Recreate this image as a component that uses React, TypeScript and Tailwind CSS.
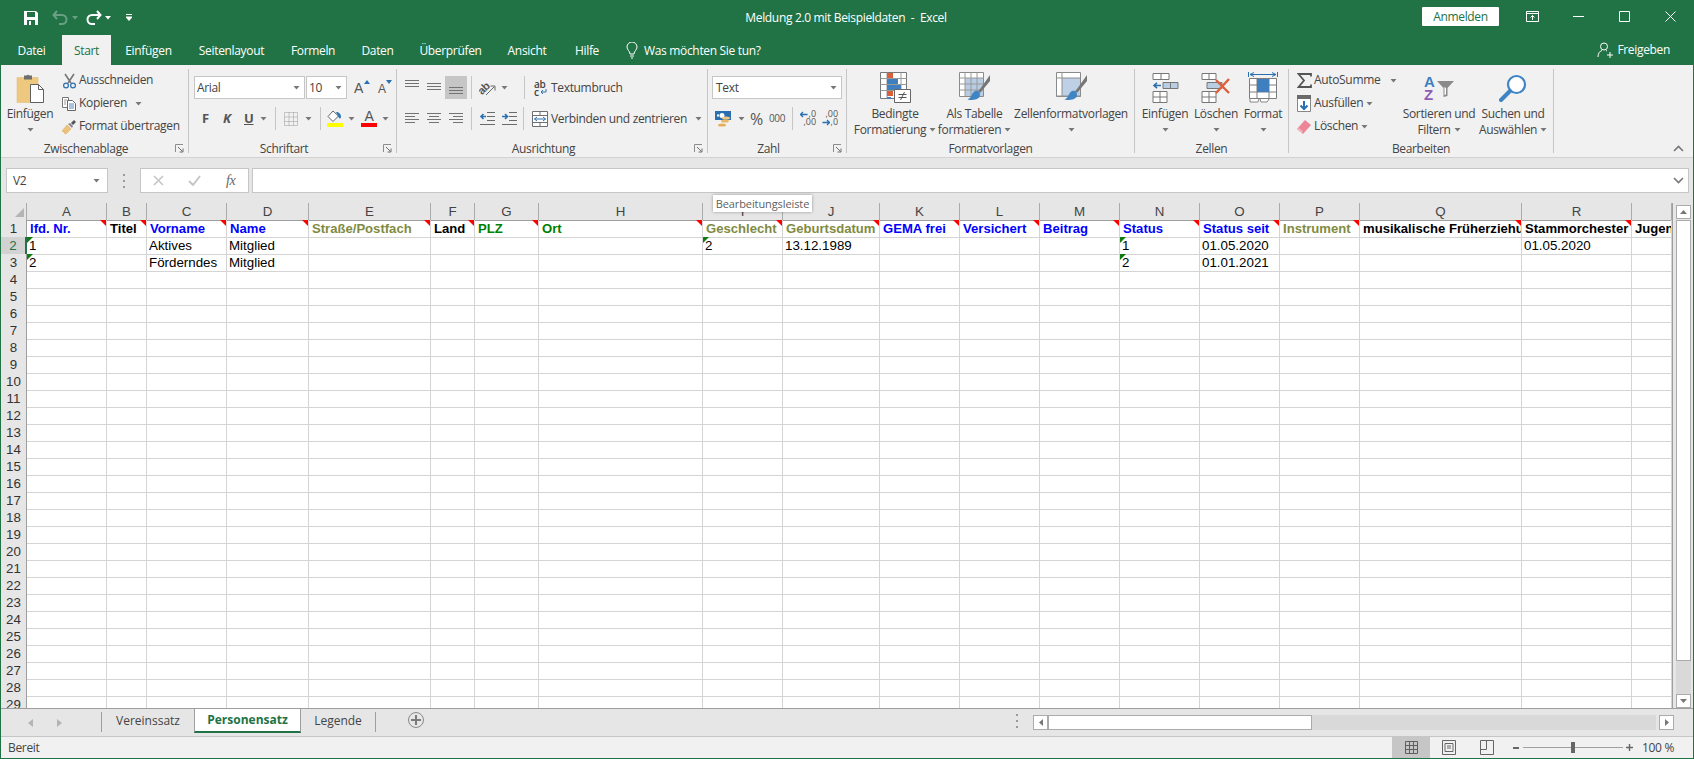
import type { ReactNode } from 'react';

function Caret({ dark = false }: { dark?: boolean }) {
  return (
    <svg width="7" height="4" viewBox="0 0 7 4" className="shrink-0">
      <path d="M.5 0h6L3.5 3.6z" fill={dark ? '#5f5f5f' : '#777'} />
    </svg>
  );
}

function Sep({ ml = '' }: { ml?: string }) {
  return <div className={`w-px h-[23px] bg-[#c6c6c6] shrink-0 ${ml}`} />;
}

function Launcher() {
  return (
    <svg width="9" height="9" viewBox="0 0 9 9" className="absolute right-[4px] bottom-0">
      <path d="M.5 8V.5H8" stroke="#8d8d8d" fill="none" />
      <path d="M3 3l4.5 4.5M8 4.5V8H4.5" stroke="#6f6f6f" fill="none" />
    </svg>
  );
}

function Group({ width, label, launcher, children }: { width: string; label: string; launcher?: boolean; children: ReactNode }) {
  return (
    <div className={`${width} shrink-0 flex flex-col border-r border-[#c6c6c6] relative h-[84px]`}>
      <div className="h-[72px] shrink-0">{children}</div>
      <div className={`h-[16px] shrink-0 leading-[16px] text-center whitespace-nowrap ${launcher ? 'pr-[17px]' : ''}`}>{label}</div>
      {launcher && <Launcher />}
    </div>
  );
}

function BigBtn({ width, icon, line1, line2, caret2 }: { width: string; icon: ReactNode; line1: string; line2?: string; caret2?: boolean }) {
  return (
    <div className={`${width} shrink-0 flex flex-col items-center pt-[3px]`}>
      <div className="h-[31px] flex items-center justify-center">{icon}</div>
      <div className="mt-[3px] h-[16px] leading-[16px] whitespace-nowrap">{line1}</div>
      <div className="h-[16px] flex items-center justify-center gap-[3px] whitespace-nowrap leading-[16px]">
        {line2}
        {caret2 && <Caret />}
      </div>
    </div>
  );
}

function SmallRow({ icon, label, caret, caretGap = 'ml-[3px]' }: { icon: ReactNode; label: string; caret?: boolean; caretGap?: string }) {
  return (
    <div className="h-[23px] flex items-center whitespace-nowrap">
      <div className="w-[18px] flex justify-center shrink-0">{icon}</div>
      <span className="ml-[1px] -mt-[2px]">{label}</span>
      {caret && (
        <span className={caretGap}>
          <Caret />
        </span>
      )}
    </div>
  );
}

function Lines({ y, x }: { y: number[]; x: number[][] }) {
  return (
    <svg width="15" height="15" viewBox="0 0 15 15" className="shrink-0">
      {y.map((v, i) => (
        <rect key={i} x={x[i][0]} y={v} width={x[i][1]} height="1" fill="#737373" />
      ))}
    </svg>
  );
}

const FULL3 = [[0, 14], [0, 14], [0, 14]];

const Scissors = (
  <svg width="15" height="16" viewBox="0 0 15 16">
    <path d="M3 1l6 9M12 1L6 10" stroke="#777" strokeWidth="1.6" fill="none" />
    <circle cx="4" cy="12.5" r="2.4" stroke="#2a6fb0" strokeWidth="1.2" fill="none" />
    <circle cx="11" cy="12.5" r="2.4" stroke="#2a6fb0" strokeWidth="1.2" fill="none" />
  </svg>
);

const CopyIcon = (
  <svg width="15" height="15" viewBox="0 0 15 15">
    <path d="M.5 1.5h6v10h-6z" fill="#fff" stroke="#777" />
    <path d="M5.5 4.5h5l3 3v7h-8z" fill="#fff" stroke="#666" />
    <path d="M7 8h5M7 10h5M7 12h5" stroke="#4f86c0" />
    <path d="M2 4h3M2 6h2M2 8h2" stroke="#999" />
  </svg>
);

const Painter = (
  <svg width="16" height="16" viewBox="0 0 16 16">
    <path d="M1 12l5-6 4 4-5 5-2-1 1-2-2 1z" fill="#eec27a" stroke="#d9a75c" strokeWidth=".5" />
    <path d="M7 5l2-1 3 3-1 2z" fill="#888" />
    <path d="M10 4l3-3 2 2-3 3z" fill="#555" />
  </svg>
);

const PasteIcon = (
  <svg width="29" height="32" viewBox="0 0 29 32">
    <path d="M1 5.5h21v25H1z" fill="#edc87e" stroke="#e0b86c" strokeWidth=".5" />
    <path d="M8 3.5h2.5a2 2 0 0 1 3 0H16v4H8z" fill="#6f6f6f" />
    <path d="M14.5 12.5h8l5 5v13h-13z" fill="#fff" stroke="#5f5f5f" />
    <path d="M22.5 12.5v5h5" fill="none" stroke="#5f5f5f" />
  </svg>
);

const FillBucket = (
  <svg width="16" height="17" viewBox="0 0 16 17">
    <path d="M6 1L1 6.5l5 5 5.5-5.5z" fill="#fff" stroke="#666" />
    <path d="M9 2c3 0 5 2 5 5 0 1-1 2-2 1l-1-2z" fill="#2f77b6" />
    <rect x="0" y="13" width="16" height="4" fill="#ffff00" />
  </svg>
);

const GridDots = (
  <svg width="14" height="14" viewBox="0 0 14 14">
    <path d="M.5.5h13v13H.5zM.5 5h13M.5 9.5h13M5 .5v13M9.5.5v13" fill="none" stroke="#9a9a9a" strokeDasharray="1 1" />
  </svg>
);

const OrientIcon = (
  <svg width="18" height="17" viewBox="0 0 18 17">
    <text x="-1" y="13" fontSize="11" fontWeight="600" fill="#555" fontFamily="Liberation Sans" transform="rotate(-45 5 10)">ab</text>
    <path d="M7 16l8-8M11.5 7H16v4.5" stroke="#666" fill="none" />
  </svg>
);

const IndentLeft = (
  <svg width="16" height="13" viewBox="0 0 16 13">
    <path d="M8 .5h8M8 4.5h8M8 8.5h8M1 12.5h15" stroke="#6a6a6a" />
    <path d="M7 4.5H2M4.5 2L2 4.5 4.5 7" stroke="#2a6fb0" strokeWidth="1.6" fill="none" />
  </svg>
);

const IndentRight = (
  <svg width="16" height="13" viewBox="0 0 16 13">
    <path d="M8 .5h8M8 4.5h8M8 8.5h8M1 12.5h15" stroke="#6a6a6a" />
    <path d="M1 4.5h5M4 2l2.5 2.5L4 7" stroke="#2a6fb0" strokeWidth="1.6" fill="none" />
  </svg>
);

const WrapIcon = (
  <div className="w-[13px] h-[16px] relative text-[10px] leading-[8px] text-[#444] font-semibold">
    <div>ab</div>
    <div className="flex items-center">
      c
      <svg width="7" height="6" viewBox="0 0 7 6" className="ml-[1px]">
        <path d="M6 0v3H1M3 1L1 3l2 2" stroke="#2a6fb0" fill="none" />
      </svg>
    </div>
  </div>
);

const MergeIcon = (
  <svg width="16" height="16" viewBox="0 0 16 16">
    <path d="M.5.5h15v15H.5zM.5 4.5h15M.5 11.5h15M8 .5v4M8 11.5v4" fill="#fff" stroke="#6f6f6f" />
    <path d="M2.5 8h11M5 6L2.5 8 5 10M11 6l2.5 2L11 10" stroke="#2a6fb0" fill="none" />
  </svg>
);

const Currency = (
  <svg width="18" height="18" viewBox="0 0 18 18">
    <rect x="0" y="1" width="16" height="9" fill="#2a6fb0" />
    <circle cx="7" cy="5.5" r="2.5" fill="#fff" />
    <rect x="2" y="4.5" width="2" height="2" fill="#fff" />
    <ellipse cx="10" cy="11" rx="4" ry="1.6" fill="#eab765" />
    <ellipse cx="11" cy="8" rx="4" ry="1.6" fill="#f0c77e" />
    <ellipse cx="7" cy="15" rx="4" ry="1.6" fill="#e8ae57" />
  </svg>
);

function DecIcon({ more }: { more?: boolean }) {
  return (
    <div className="w-[16px] h-[17px] flex flex-col items-end text-[9px] leading-[8px] tracking-normal text-[#555] relative">
      <span>{more ? ',00' : ',0'}</span>
      <span>{more ? ',0' : ',00'}</span>
      <svg width="8" height="7" viewBox="0 0 8 7" className={more ? 'absolute left-0 bottom-[1px]' : 'absolute left-0 top-[1px]'}>
        {more ? (
          <path d="M.5 3.5H7M5 1l2.5 2.5L5 6" stroke="#2a6fb0" strokeWidth="1.3" fill="none" />
        ) : (
          <path d="M7.5 3.5H1M3 1L.5 3.5 3 6" stroke="#2a6fb0" strokeWidth="1.3" fill="none" />
        )}
      </svg>
    </div>
  );
}

const CondIcon = (
  <svg width="31" height="31" viewBox="0 0 31 31">
    <path d="M.5.5h26v26H.5z" fill="#fff" stroke="#777" />
    <path d="M.5 6.5h26M.5 12.5h26M.5 18.5h26M7 .5v26M21 .5v26" stroke="#9a9a9a" />
    <rect x="7" y="1" width="6" height="5" fill="#d9603b" />
    <rect x="7" y="7" width="11" height="5" fill="#3f7fbf" />
    <rect x="7" y="13" width="14" height="5" fill="#3f7fbf" />
    <rect x="7" y="19" width="6" height="5" fill="#d9603b" />
    <rect x="7" y="25" width="4" height="2" fill="#3f7fbf" />
    <path d="M14.5 17.5h16v13h-16z" fill="#fff" stroke="#666" />
    <path d="M18.5 22.5h8M18.5 25.5h8M24.5 20l-4 8" stroke="#555" fill="none" />
  </svg>
);

function TableBrush({ full }: { full?: boolean }) {
  return (
    <svg width="31" height="31" viewBox="0 0 31 31">
      <path d="M.5.5h24v24H.5z" fill="#fff" stroke="#8a8a8a" />
      <rect x="6" y="6" width="18" height="18" fill={full ? '#bdd0e6' : '#b8cde4'} />
      {!full && <path d="M.5 6h24M.5 12h24M.5 18h24M6 .5v24M12 .5v24M18 .5v24" stroke="#999" />}
      {full && <path d="M.5 6h24M6 .5v24M.5 24h24" stroke="#8f8f8f" />}
      <path d="M31 3L21 17l-2 2 2 2L31 9z" fill="#767676" />
      <path d="M16 19c3-1 5 1 5 4 0 4-5 5-10 5-2 0-3-1-2-1 4-1 3-6 7-8z" fill="#3f84c3" />
    </svg>
  );
}

const InsCells = (
  <svg width="27" height="31" viewBox="0 0 27 31">
    <path d="M1 1.5h16v6H1zM9 1.5v6M1 19.5h14v11H1zM1 25h14M8 19.5v11" fill="#fff" stroke="#777" />
    <path d="M11 10.5h15v6H11zM18.5 10.5v6" fill="#b9cde4" stroke="#777" />
    <path d="M9 13.5H2M5 10.8L2 13.5l3 2.7" stroke="#2a6fb0" strokeWidth="1.6" fill="none" />
  </svg>
);

const DelCells = (
  <svg width="31" height="31" viewBox="0 0 31 31">
    <path d="M1 1.5h14v6H1zM8 1.5v6M1 19.5h14v11H1zM1 25h14M8 19.5v11" fill="#fff" stroke="#777" />
    <path d="M6 10.5h15v6H6z" fill="#b9cde4" stroke="#777" />
    <path d="M15 8l13 13M28 7L15 21" stroke="#dd5f3b" strokeWidth="2.4" fill="none" />
  </svg>
);

const FormatCells = (
  <svg width="30" height="32" viewBox="0 0 30 32">
    <path d="M.5 0v5M29.5 0v5M2 2.5h26M6 .5L2 2.5l4 2M24 .5l4 2-4 2" stroke="#2a6fb0" fill="none" />
    <path d="M1.5 6.5h27v20h-27zM1.5 13h27M1.5 20h27M9 6.5v20M21 6.5v20" fill="#fff" stroke="#7d7d7d" />
    <rect x="9" y="7" width="12" height="13" fill="#3f7fbf" />
    <path d="M2 27v3h8l1-3M12 27l1 3h6l2-3" fill="#fff" stroke="#888" />
  </svg>
);

const Sigma = (
  <svg width="15" height="15" viewBox="0 0 15 15">
    <path d="M14 3.5V1H1.5L7 7.5 1.5 14H14v-2.5" fill="none" stroke="#555" strokeWidth="1.8" />
  </svg>
);

const FillDown = (
  <svg width="14" height="17" viewBox="0 0 14 17">
    <path d="M.5.5h13v16H.5z" fill="#fff" stroke="#888" />
    <rect width="14" height="4" fill="#6a6a6a" />
    <path d="M7 6v8M3.5 10.5L7 14l3.5-3.5" stroke="#2a6fb0" strokeWidth="2" fill="none" />
  </svg>
);

const Eraser = (
  <svg width="14" height="14" viewBox="0 0 14 14">
    <path d="M8 0l6 5-8 9-6-5z" fill="#ec8595" />
    <path d="M2 8l4 3.5L5 13 .5 9z" fill="#f3b7c0" />
  </svg>
);

const SortIcon = (
  <div className="w-[30px] h-[28px] flex items-center relative">
    <div className="flex flex-col text-[15px] leading-[13px] font-bold font-['Liberation_Sans']">
      <span className="text-[#3f7fbf]">A</span>
      <span className="text-[#8e5bb5]">Z</span>
    </div>
    <svg width="17" height="16" viewBox="0 0 17 16" className="absolute right-0 top-[7px]">
      <path d="M0 0h17L10.5 7v8l-4 1V7z" fill="#8a8a8a" />
      <path d="M7.5 6l1.5 1v6.5l-1.5.5z" fill="#fff" />
    </svg>
  </div>
);

const SearchIcon = (
  <svg width="28" height="28" viewBox="0 0 28 28">
    <circle cx="17.5" cy="10.5" r="8.5" fill="#fff" stroke="#3f84c3" strokeWidth="2.2" />
    <path d="M11 17L2 26" stroke="#3f84c3" strokeWidth="4" strokeLinecap="round" />
  </svg>
);

const Ribbon = () => (
  <div className="h-[93px] shrink-0 bg-[#f1f1f1] border-b border-[#d2d2d2] pt-[4px] flex text-[#444] relative">
    <Group width="w-[188px]" label="Zwischenablage" launcher>
      <div className="flex">
        <BigBtn width="w-[58px]" icon={PasteIcon} line1="Einfügen" caret2 />
        <div className="ml-[1px]">
          <SmallRow icon={Scissors} label="Ausschneiden" />
          <SmallRow icon={CopyIcon} label="Kopieren" caret caretGap="ml-[8px]" />
          <SmallRow icon={Painter} label="Format übertragen" />
        </div>
      </div>
    </Group>

    <Group width="w-[208px]" label="Schriftart" launcher>
      <div className="pt-[7px] pl-[5px] flex items-center h-[30px] font-normal">
        <div className="w-[111px] h-[23px] bg-white border border-[#c6c6c6] flex items-center justify-between pl-[2px] pr-[4px]">
          <span>Arial</span>
          <Caret />
        </div>
        <div className="w-[41px] h-[23px] ml-[1px] bg-white border border-[#c6c6c6] flex items-center justify-between pl-[2px] pr-[4px]">
          <span>10</span>
          <Caret />
        </div>
        <div className="ml-[7px] w-[16px] h-[16px] relative text-[14px] leading-[16px] text-[#555] font-['Liberation_Sans']">
          A
          <svg width="6" height="4" viewBox="0 0 6 4" className="absolute right-0 top-0">
            <path d="M3 0l3 4H0z" fill="#2a6fb0" />
          </svg>
        </div>
        <div className="ml-[8px] w-[14px] h-[16px] relative text-[12px] leading-[18px] text-[#555] font-['Liberation_Sans']">
          A
          <svg width="6" height="4" viewBox="0 0 6 4" className="absolute right-0 top-0">
            <path d="M3 4L0 0h6z" fill="#2a6fb0" />
          </svg>
        </div>
      </div>
      <div className="mt-[8px] h-[23px] pl-[13px] flex items-center">
        <span className="w-[7px] font-bold text-[13px] text-[#555]">F</span>
        <span className="ml-[14px] w-[9px] font-bold italic text-[13px] text-[#555]">K</span>
        <span className="ml-[12px] w-[9px] font-bold underline text-[13px] text-[#555]">U</span>
        <span className="ml-[7px]"><Caret /></span>
        <Sep ml="ml-[8px]" />
        <span className="ml-[8px]">{GridDots}</span>
        <span className="ml-[7px]"><Caret /></span>
        <Sep ml="ml-[8px]" />
        <span className="ml-[6px]">{FillBucket}</span>
        <span className="ml-[5px]"><Caret /></span>
        <div className="ml-[6px] w-[16px] h-[17px] flex flex-col items-center">
          <span className="text-[14px] leading-[13px] text-[#555] font-['Liberation_Sans']">A</span>
          <span className="w-[16px] h-[4px] bg-[#ff0000]" />
        </div>
        <span className="ml-[5px]"><Caret /></span>
      </div>
    </Group>

    <Group width="w-[311px]" label="Ausrichtung" launcher>
      <div className="pt-[7px] pl-[8px] h-[30px] flex items-center">
        <Lines y={[0, 3, 6]} x={FULL3} />
        <span className="ml-[7px]"><Lines y={[3, 6, 9]} x={FULL3} /></span>
        <div className="ml-[3px] w-[22px] h-[23px] bg-[#c6c6c6] flex items-center justify-center">
          <Lines y={[7, 10, 13]} x={FULL3} />
        </div>
        <Sep ml="ml-[4px]" />
        <span className="ml-[7px]">{OrientIcon}</span>
        <span className="ml-[4px]"><Caret /></span>
        <Sep ml="ml-[16px]" />
        <span className="ml-[9px]">{WrapIcon}</span>
        <span className="ml-[4px] whitespace-nowrap">Textumbruch</span>
      </div>
      <div className="mt-[8px] h-[23px] pl-[8px] flex items-center">
        <Lines y={[2, 5, 8, 11]} x={[[0, 14], [0, 10], [0, 14], [0, 10]]} />
        <span className="ml-[7px]"><Lines y={[2, 5, 8, 11]} x={[[0, 14], [2, 10], [0, 14], [2, 10]]} /></span>
        <span className="ml-[7px]"><Lines y={[2, 5, 8, 11]} x={[[0, 14], [4, 10], [0, 14], [4, 10]]} /></span>
        <Sep ml="ml-[7px]" />
        <span className="ml-[7px]">{IndentLeft}</span>
        <span className="ml-[6px]">{IndentRight}</span>
        <Sep ml="ml-[6px]" />
        <span className="ml-[8px]">{MergeIcon}</span>
        <span className="ml-[3px] whitespace-nowrap">Verbinden und zentrieren</span>
        <span className="ml-[8px]"><Caret /></span>
      </div>
    </Group>

    <Group width="w-[139px]" label="Zahl" launcher>
      <div className="pt-[7px] pl-[4px] h-[30px]">
        <div className="w-[130px] h-[23px] bg-white border border-[#c6c6c6] flex items-center justify-between pl-[3px] pr-[4px]">
          <span>Text</span>
          <Caret />
        </div>
      </div>
      <div className="mt-[8px] h-[23px] pl-[7px] flex items-center">
        {Currency}
        <span className="ml-[5px]"><Caret /></span>
        <span className="ml-[5px] text-[16px] leading-none text-[#555]">%</span>
        <span className="ml-[6px] text-[10px] text-[#555]">000</span>
        <Sep ml="ml-[7px]" />
        <span className="ml-[7px]"><DecIcon /></span>
        <span className="ml-[6px]"><DecIcon more /></span>
      </div>
    </Group>

    <Group width="w-[288px]" label="Formatvorlagen">
      <div className="flex pl-[6px]">
        <BigBtn width="w-[84px]" icon={CondIcon} line1="Bedingte" line2="Formatierung" caret2 />
        <BigBtn width="w-[75px]" icon={<TableBrush />} line1="Als Tabelle" line2="formatieren" caret2 />
        <BigBtn width="w-[118px]" icon={<TableBrush full />} line1="Zellenformatvorlagen" caret2 />
      </div>
    </Group>

    <Group width="w-[154px]" label="Zellen">
      <div className="flex pl-[5px]">
        <BigBtn width="w-[50px]" icon={InsCells} line1="Einfügen" caret2 />
        <BigBtn width="w-[52px]" icon={DelCells} line1="Löschen" caret2 />
        <BigBtn width="w-[42px]" icon={FormatCells} line1="Format" caret2 />
      </div>
    </Group>

    <Group width="w-[265px]" label="Bearbeiten">
      <div className="flex">
        <div className="w-[113px] pl-[6px]">
          <SmallRow icon={Sigma} label="AutoSumme" caret caretGap="ml-[10px]" />
          <SmallRow icon={FillDown} label="Ausfüllen" caret />
          <SmallRow icon={Eraser} label="Löschen" caret />
        </div>
        <BigBtn width="w-[74px]" icon={SortIcon} line1="Sortieren und" line2="Filtern" caret2 />
        <BigBtn width="w-[74px]" icon={SearchIcon} line1="Suchen und" line2="Auswählen" caret2 />
      </div>
    </Group>

    <div className="flex-1 flex justify-end items-end pr-[9px] pb-[5px]">
      <svg width="11" height="7" viewBox="0 0 11 7">
        <path d="M1 6l4.5-4.5L10 6" stroke="#777" strokeWidth="1.6" fill="none" />
      </svg>
    </div>
  </div>
);

const TitleBar = () => (
  <div className="h-[35px] shrink-0 flex text-white">
    <div className="w-[743px] shrink-0 flex items-center pl-[22px]">
      <svg width="16" height="16" viewBox="0 0 16 16">
        <path d="M1 1h12l2 2v12H1z" fill="#fff" />
        <rect x="4" y="2" width="8" height="5" fill="#217346" />
        <rect x="4" y="10" width="8" height="5" fill="#217346" />
        <rect x="6" y="11" width="2" height="4" fill="#fff" />
      </svg>
      <svg width="17" height="15" viewBox="0 0 17 15" className="ml-[13px]">
        <path d="M5 1L1.5 5 5 9M2 5h8a4.5 4.5 0 0 1 0 9H7" stroke="#69a084" strokeWidth="2" fill="none" />
      </svg>
      <svg width="6" height="4" viewBox="0 0 6 4" className="ml-[3px]">
        <path d="M0 0h6L3 3.5z" fill="#69a084" />
      </svg>
      <svg width="17" height="15" viewBox="0 0 17 15" className="ml-[7px]">
        <path d="M12 1l3.5 4L12 9M15 5H7a4.5 4.5 0 0 0 0 9h3" stroke="#fff" strokeWidth="2" fill="none" />
      </svg>
      <svg width="6" height="4" viewBox="0 0 6 4" className="ml-[3px]">
        <path d="M0 0h6L3 3.5z" fill="#fff" />
      </svg>
      <svg width="6" height="7" viewBox="0 0 6 7" className="ml-[15px]">
        <path d="M0 .5h6M0 3h6L3 6.5 0 3z" stroke="#fff" strokeWidth="1" fill="#fff" />
      </svg>
    </div>
    <div className="w-[204px] shrink-0 flex items-center justify-center whitespace-pre">Meldung 2.0 mit Beispieldaten  -  Excel</div>
    <div className="flex-1 flex items-center">
      <div className="ml-[474px] w-[77px] h-[19px] bg-white text-[#217346] text-center leading-[19px] rounded-[1px] -mt-[2px]">Anmelden</div>
      <svg width="13" height="11" viewBox="0 0 13 11" className="ml-[27px] -mt-[3px]">
        <path d="M.5.5h12v10H.5zM.5 2.5h12" stroke="#fff" fill="none" />
        <path d="M6.5 9V4.5M4.5 6.5l2-2 2 2" stroke="#fff" fill="none" />
      </svg>
      <svg width="11" height="11" viewBox="0 0 11 11" className="ml-[34px] -mt-[3px]">
        <path d="M0 5.5h11" stroke="#fff" />
      </svg>
      <svg width="11" height="11" viewBox="0 0 11 11" className="ml-[35px] -mt-[3px]">
        <path d="M.5.5h10v10H.5z" stroke="#fff" fill="none" />
      </svg>
      <svg width="11" height="11" viewBox="0 0 11 11" className="ml-[35px] -mt-[3px]">
        <path d="M.5.5l10 10M10.5.5l-10 10" stroke="#fff" />
      </svg>
    </div>
  </div>
);

const TabRow = () => (
  <div className="h-[30px] shrink-0 flex text-white">
    <div className="w-[61px] flex items-center justify-center pt-[1px]">Datei</div>
    <div className="w-[49px] bg-[#f1f1f1] text-[#217346] flex items-center justify-center pt-[1px]">Start</div>
    <div className="ml-[14px] w-[47px] flex items-center justify-center pt-[1px]">Einfügen</div>
    <div className="ml-[27px] w-[65px] flex items-center justify-center pt-[1px]">Seitenlayout</div>
    <div className="ml-[27px] w-[44px] flex items-center justify-center pt-[1px]">Formeln</div>
    <div className="ml-[27px] w-[31px] flex items-center justify-center pt-[1px]">Daten</div>
    <div className="ml-[28px] w-[59px] flex items-center justify-center pt-[1px]">Überprüfen</div>
    <div className="ml-[27px] w-[40px] flex items-center justify-center pt-[1px]">Ansicht</div>
    <div className="ml-[28px] w-[24px] flex items-center justify-center pt-[1px]">Hilfe</div>
    <div className="ml-[27px] flex items-center pt-[1px]">
      <svg width="12" height="17" viewBox="0 0 12 17">
        <path d="M4 12C4 9 1 8 1 5a5 5 0 0 1 10 0c0 3-3 4-3 7zM4 14h4M5 16h2" stroke="#fff" fill="none" />
      </svg>
      <span className="ml-[6px] whitespace-nowrap">Was möchten Sie tun?</span>
    </div>
    <div className="flex-1 flex items-center justify-end pr-[23px]">
      <svg width="16" height="16" viewBox="0 0 16 16">
        <circle cx="7" cy="4.5" r="3.5" stroke="#fff" fill="none" />
        <path d="M1 15c0-4 2-6 4-6.5M9 8.5l1 .5M10 13h6M13 10v6" stroke="#fff" fill="none" />
      </svg>
      <span className="ml-[4px]">Freigeben</span>
    </div>
  </div>
);

const FormulaBar = () => (
  <div className="h-[45px] shrink-0 bg-[#e6e6e6] pt-[10px] flex items-start text-[#444]">
    <div className="ml-[5px] w-[102px] h-[25px] bg-white border border-[#c6c6c6] flex items-center justify-between pl-[6px] pr-[7px]">
      <span className="text-[12px]">V2</span>
      <Caret />
    </div>
    <div className="ml-[14px] w-[3px] h-[14px] mt-[6px] flex flex-col justify-between items-center">
      <span className="w-[2px] h-[2px] bg-[#9a9a9a]" />
      <span className="w-[2px] h-[2px] bg-[#9a9a9a]" />
      <span className="w-[2px] h-[2px] bg-[#9a9a9a]" />
    </div>
    <div className="ml-[15px] w-[109px] h-[25px] bg-white border border-[#c6c6c6] flex items-center">
      <svg width="11" height="11" viewBox="0 0 11 11" className="ml-[12px]">
        <path d="M1 1l9 9M10 1l-9 9" stroke="#c6c6c6" strokeWidth="1.6" />
      </svg>
      <svg width="13" height="11" viewBox="0 0 13 11" className="ml-[24px]">
        <path d="M1 6l4 4 7-9" stroke="#c6c6c6" strokeWidth="2" fill="none" />
      </svg>
      <span className="ml-[25px] italic font-['Liberation_Serif'] text-[14px] text-[#666]">fx</span>
    </div>
    <div className="ml-[3px] flex-1 h-[25px] bg-white border border-[#c6c6c6] flex items-center justify-end pr-[4px] mr-[4px]">
      <svg width="11" height="7" viewBox="0 0 11 7">
        <path d="M1 1l4.5 4.5L10 1" stroke="#777" strokeWidth="1.6" fill="none" />
      </svg>
    </div>
  </div>
);

const COLS = ['A', 'B', 'C', 'D', 'E', 'F', 'G', 'H', 'I', 'J', 'K', 'L', 'M', 'N', 'O', 'P', 'Q', 'R', ''];
const GRID = 'grid grid-cols-[26px_80px_40px_80px_82px_122px_44px_64px_164px_80px_97px_80px_80px_80px_80px_80px_80px_162px_110px_40px] w-[1671px]';

const HEAD: [string, string][] = [
  ['lfd. Nr.', 'text-[#0000ff]'],
  ['Titel', 'text-black'],
  ['Vorname', 'text-[#0000ff]'],
  ['Name', 'text-[#0000ff]'],
  ['Straße/Postfach', 'text-[#7f8b42]'],
  ['Land', 'text-black'],
  ['PLZ', 'text-[#008000]'],
  ['Ort', 'text-[#008000]'],
  ['Geschlecht', 'text-[#7f8b42]'],
  ['Geburtsdatum', 'text-[#7f8b42]'],
  ['GEMA frei', 'text-[#0000ff]'],
  ['Versichert', 'text-[#0000ff]'],
  ['Beitrag', 'text-[#0000ff]'],
  ['Status', 'text-[#0000ff]'],
  ['Status seit', 'text-[#0000ff]'],
  ['Instrument', 'text-[#7f8b42]'],
  ['musikalische Früherziehung', 'text-black'],
  ['Stammorchester', 'text-black'],
  ['Jugendorchester', 'text-black'],
];

const DATA: Record<number, Record<number, { v: string; flag?: boolean }>> = {
  2: { 0: { v: '1', flag: true }, 2: { v: 'Aktives' }, 3: { v: 'Mitglied' }, 8: { v: '2', flag: true }, 9: { v: '13.12.1989' }, 13: { v: '1', flag: true }, 14: { v: '01.05.2020' }, 17: { v: '01.05.2020' } },
  3: { 0: { v: '2', flag: true }, 2: { v: 'Förderndes' }, 3: { v: 'Mitglied' }, 13: { v: '2', flag: true }, 14: { v: '01.01.2021' } },
};

const Sheet = () => (
  <div className="flex-1 min-w-0 overflow-hidden bg-white border-r border-[#9e9e9e] font-['Liberation_Sans',Arial,sans-serif] text-[13.33px] text-black">
    <div className={`${GRID} h-[17px] bg-[#e6e6e6] border-b border-[#9e9e9e] box-content -mb-px`}>
      <div className="border-r border-[#ababab] relative">
        <div className="absolute right-[2px] bottom-[3px] w-0 h-0 border-l-[9px] border-l-transparent border-b-[9px] border-b-[#b4b4b4]" />
      </div>
      {COLS.map((c, i) => (
        <div key={i} className="border-r border-[#ababab] text-center text-[#444] leading-[17px]">{c}</div>
      ))}
    </div>
    {Array.from({ length: 29 }, (_, r) => r + 1).map((r) => (
      <div key={r} className={`${GRID} h-[17px]`}>
        <div
          className={`text-center leading-[17px] border-b ${
            r === 2
              ? 'bg-[#d2d2d2] text-[#217346] border-[#ababab] border-r-2 border-r-[#217346]'
              : 'bg-[#e6e6e6] text-[#333] border-[#ababab] border-r border-r-[#9e9e9e]'
          }`}
        >
          {r}
        </div>
        {COLS.map((_, c) => {
          const cell = DATA[r]?.[c];
          const head = r === 1 ? HEAD[c] : null;
          return (
            <div key={c} className="relative border-r border-b border-[#d4d4d4] overflow-hidden whitespace-nowrap leading-[17px]">
              {head && (
                <>
                  <span className={`block pl-[3px] font-bold text-[13.1px] ${head[1]}`}>{head[0]}</span>
                  {c < 18 && <span className="absolute top-0 right-0 w-0 h-0 border-l-[6px] border-l-transparent border-t-[6px] border-t-[#ff0000]" />}
                </>
              )}
              {cell && <span className="block pl-[2px]">{cell.v}</span>}
              {cell?.flag && <span className="absolute top-0 left-0 w-0 h-0 border-r-[6px] border-r-transparent border-t-[6px] border-t-[#0f7a0f]" />}
            </div>
          );
        })}
      </div>
    ))}
  </div>
);

const VScroll = () => (
  <div className="w-[20px] shrink-0 bg-[#e6e6e6] flex flex-col items-center pt-[2px]">
    <div className="w-[15px] h-[14px] bg-white border border-[#ababab] flex items-center justify-center shrink-0">
      <svg width="7" height="4" viewBox="0 0 7 4"><path d="M3.5 0L7 4H0z" fill="#777" /></svg>
    </div>
    <div className="w-[15px] flex-1 mt-px flex flex-col">
      <div className="h-[441px] bg-white border border-[#ababab]" />
      <div className="flex-1 bg-[#d9d9d9]" />
    </div>
    <div className="w-[15px] h-[14px] bg-white border border-[#ababab] flex items-center justify-center shrink-0">
      <svg width="7" height="4" viewBox="0 0 7 4"><path d="M3.5 4L7 0H0z" fill="#777" /></svg>
    </div>
  </div>
);

const SheetTabs = () => (
  <div className="h-[29px] shrink-0 bg-[#e6e6e6] border-t border-b border-t-[#9e9e9e] border-b-[#c6c6c6] flex text-[#444] tracking-normal">
    <div className="w-[100px] flex items-center pl-[27px] shrink-0">
      <svg width="5" height="8" viewBox="0 0 5 8"><path d="M5 0v8L0 4z" fill="#b4b4b4" /></svg>
      <svg width="5" height="8" viewBox="0 0 5 8" className="ml-[24px]"><path d="M0 0v8l5-4z" fill="#b4b4b4" /></svg>
    </div>
    <div className="w-px h-[20px] mt-[3px] bg-[#9e9e9e]" />
    <div className="w-[92px] h-[24px] flex items-center justify-center">Vereinssatz</div>
    <div className="w-[107px] h-[24px] bg-white border-b-2 border-x border-x-[#9e9e9e] border-b-[#217346] flex items-center justify-center font-bold text-[#217346]">Personensatz</div>
    <div className="w-[74px] h-[24px] flex items-center justify-center">Legende</div>
    <div className="w-px h-[20px] mt-[3px] bg-[#9e9e9e]" />
    <div className="ml-[32px] mt-[3px] w-[16px] h-[16px] rounded-full border border-[#8a8a8a] flex items-center justify-center shrink-0">
      <svg width="10" height="10" viewBox="0 0 10 10"><path d="M5 0v10M0 5h10" stroke="#7a7a7a" strokeWidth="2" /></svg>
    </div>
    <div className="ml-[592px] w-[3px] h-[14px] mt-[5px] flex flex-col justify-between">
      <span className="w-[2px] h-[2px] bg-[#9a9a9a]" />
      <span className="w-[2px] h-[2px] bg-[#9a9a9a]" />
      <span className="w-[2px] h-[2px] bg-[#9a9a9a]" />
    </div>
    <div className="ml-[14px] mt-[6px] h-[15px] flex">
      <div className="w-[15px] bg-white border border-[#ababab] flex items-center justify-center">
        <svg width="4" height="7" viewBox="0 0 4 7"><path d="M4 0v7L0 3.5z" fill="#777" /></svg>
      </div>
      <div className="w-[264px] bg-white border border-[#ababab]" />
      <div className="w-[344px] bg-[#d9d9d9]" />
      <div className="ml-[3px] w-[15px] bg-white border border-[#ababab] flex items-center justify-center">
        <svg width="4" height="7" viewBox="0 0 4 7"><path d="M0 0v7l4-3.5z" fill="#777" /></svg>
      </div>
    </div>
  </div>
);

const StatusBar = () => (
  <div className="h-[21px] shrink-0 bg-[#f1f1f1] flex items-center text-[#444]">
    <span className="ml-[7px]">Bereit</span>
    <div className="ml-auto flex items-center h-full">
      <div className="w-[38px] h-full bg-[#c6c6c6] flex items-center justify-center">
        <svg width="13" height="13" viewBox="0 0 13 13">
          <path d="M.5.5h12v12H.5zM.5 4.5h12M.5 8.5h12M4.5.5v12M8.5.5v12" fill="none" stroke="#5f5f5f" />
        </svg>
      </div>
      <svg width="14" height="15" viewBox="0 0 14 15" className="ml-[12px]">
        <path d="M.5.5h13v14H.5z" fill="none" stroke="#666" />
        <path d="M3 3.5h8v8H3zM5 6h4M5 8h4" fill="none" stroke="#666" />
      </svg>
      <svg width="14" height="15" viewBox="0 0 14 15" className="ml-[24px]">
        <path d="M.5.5h13v14H.5zM.5 9.5h6V.5" fill="none" stroke="#666" />
      </svg>
      <span className="ml-[19px] w-[6px] h-[2px] bg-[#666]" />
      <div className="ml-[4px] w-[100px] h-px bg-[#a0a0a0] flex items-center justify-center relative">
        <span className="w-[4px] h-[11px] bg-[#666]" />
      </div>
      <svg width="7" height="7" viewBox="0 0 7 7" className="ml-[3px]">
        <path d="M3.5 0v7M0 3.5h7" stroke="#666" strokeWidth="1.4" />
      </svg>
      <span className="ml-[9px] mr-[19px] whitespace-pre">100 %</span>
    </div>
  </div>
);

export default function App() {
  return (
    <div className="w-screen h-screen relative overflow-hidden flex flex-col bg-[#217346] border-x border-b border-[#217346] font-['Open_Sans',sans-serif] text-[12px] tracking-[-0.33px]">
      <TitleBar />
      <TabRow />
      <Ribbon />
      <FormulaBar />
      <div className="flex-1 min-h-0 flex tracking-normal">
        <Sheet />
        <VScroll />
      </div>
      <SheetTabs />
      <StatusBar />
      <div className="absolute left-[712px] top-[195px] w-[99px] h-[17px] bg-white shadow-[0_0_3px_rgba(0,0,0,0.35)] text-[#5f5f5f] text-center text-[11px] tracking-[-0.1px] leading-[17px] whitespace-nowrap">Bearbeitungsleiste</div>
    </div>
  );
}
